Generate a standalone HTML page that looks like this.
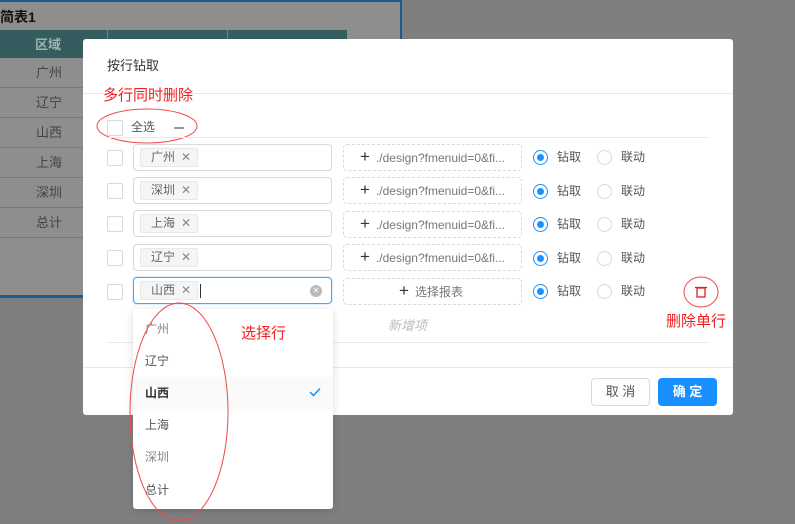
<!DOCTYPE html>
<html><head><meta charset="utf-8"><style>
*{box-sizing:border-box;margin:0;padding:0}
body{width:795px;height:523px;overflow:hidden;background:#7f7f80;font-family:"Liberation Sans","Noto Sans CJK SC",sans-serif;position:relative;font-size:12px;color:#555;line-height:1.35}
.a{position:absolute}
.tbl{left:0;top:0;width:402px;height:298px;background:#8e8e8e;border-top:2px solid #1a5b95;border-right:2px solid #1a5b95;border-bottom:3px solid #1a5b95}
.hd{left:0;top:30px;width:347px;height:28px;background:#355d5f}
.cell{left:0;width:347px;height:30px;border-bottom:1px solid #777;color:#444;font-size:13px}
.cell span{position:absolute;left:36px;top:6px}
.modal{left:83px;top:39px;width:650px;height:376px;background:#fff;border-radius:3px}
.cb{width:16px;height:16px;border:1px solid #d9d9d9;border-radius:2px;background:#fff}
.sel{left:133px;width:199px;height:27px;border:1px solid #d9d9d9;border-radius:4px;background:#fff}
.tag{position:absolute;left:6px;top:3px;height:19px;padding:0 6px 0 10px;background:#f5f5f5;border:1px solid #e8e8e8;border-radius:2px;font-size:12px;color:#666;line-height:17px}
.tag i{font-style:normal;color:#888;margin-left:6px}
.rep{left:343px;width:179px;height:27px;border:1px dashed #d9d9d9;border-radius:4px;color:#777;font-size:12px;line-height:24px;padding-left:16px;white-space:nowrap}
.rep b{font-weight:normal;color:#333;font-size:17px;margin-right:6px}
.rad{width:15px;height:15px;border-radius:50%;border:1px solid #d9d9d9;background:#fff}
.rad.on{border-color:#1890ff}
.rad.on::after{content:"";position:absolute;left:3px;top:3px;width:7px;height:7px;border-radius:50%;background:#1890ff}
.rt{font-size:12px;color:#555}
.red{color:#f02020;font-size:15px}
.dd{left:133px;top:309px;width:200px;height:200px;background:#fff;border-radius:3px;box-shadow:0 2px 8px rgba(0,0,0,.15)}
.it{position:absolute;left:12px;font-size:12px;color:#555}
</style></head><body>
<div class="a tbl"></div>
<div class="a" style="left:0;top:8px;font-size:14px;font-weight:bold;color:#111">简表1</div>
<div class="a hd"></div>
<div class="a" style="left:107px;top:30px;width:1px;height:28px;background:#6a8a8a"></div>
<div class="a" style="left:227px;top:30px;width:1px;height:28px;background:#6a8a8a"></div>
<div class="a" style="left:35px;top:36px;color:#9fb5b5;font-weight:bold;font-size:13px">区域</div>
<div class="a cell" style="top:58px"><span>广州</span></div>
<div class="a cell" style="top:88px"><span>辽宁</span></div>
<div class="a cell" style="top:118px"><span>山西</span></div>
<div class="a cell" style="top:148px"><span>上海</span></div>
<div class="a cell" style="top:178px"><span>深圳</span></div>
<div class="a cell" style="top:208px"><span>总计</span></div>

<div class="a modal"></div>
<div class="a" style="left:107px;top:57px;font-size:13px;color:#333">按行钻取</div>
<div class="a" style="left:83px;top:93px;width:650px;height:1px;background:#e8e8e8"></div>
<div class="a red" style="left:103px;top:86px">多行同时删除</div>
<svg class="a" style="left:96px;top:107px" width="104" height="38"><ellipse cx="51" cy="19" rx="50" ry="17" fill="none" stroke="#f04848" stroke-width="1"/></svg>
<div class="a cb" style="left:107px;top:120px"></div>
<div class="a" style="left:131px;top:119px;color:#555">全选</div>
<div class="a" style="left:174px;top:127px;width:10px;height:2px;background:#999"></div>
<div class="a" style="left:107px;top:137px;width:602px;height:1px;background:#e8e8e8"></div>

<div class="a cb" style="left:107px;top:150px"></div>
<div class="a sel" style="top:144px"><div class="tag">广州<i>✕</i></div></div>
<div class="a rep" style="top:144px"><b>+</b>./design?fmenuid=0&amp;fi...</div>
<div class="a rad on" style="left:533px;top:150px"></div><div class="a rt" style="left:557px;top:149px">钻取</div>
<div class="a rad" style="left:597px;top:150px"></div><div class="a rt" style="left:621px;top:149px">联动</div>

<div class="a cb" style="left:107px;top:183px"></div>
<div class="a sel" style="top:177px"><div class="tag">深圳<i>✕</i></div></div>
<div class="a rep" style="top:177px"><b>+</b>./design?fmenuid=0&amp;fi...</div>
<div class="a rad on" style="left:533px;top:184px"></div><div class="a rt" style="left:557px;top:183px">钻取</div>
<div class="a rad" style="left:597px;top:184px"></div><div class="a rt" style="left:621px;top:183px">联动</div>

<div class="a cb" style="left:107px;top:216px"></div>
<div class="a sel" style="top:210px"><div class="tag">上海<i>✕</i></div></div>
<div class="a rep" style="top:211px"><b>+</b>./design?fmenuid=0&amp;fi...</div>
<div class="a rad on" style="left:533px;top:217px"></div><div class="a rt" style="left:557px;top:216px">钻取</div>
<div class="a rad" style="left:597px;top:217px"></div><div class="a rt" style="left:621px;top:216px">联动</div>

<div class="a cb" style="left:107px;top:250px"></div>
<div class="a sel" style="top:244px"><div class="tag">辽宁<i>✕</i></div></div>
<div class="a rep" style="top:244px"><b>+</b>./design?fmenuid=0&amp;fi...</div>
<div class="a rad on" style="left:533px;top:251px"></div><div class="a rt" style="left:557px;top:250px">钻取</div>
<div class="a rad" style="left:597px;top:251px"></div><div class="a rt" style="left:621px;top:250px">联动</div>

<div class="a cb" style="left:107px;top:284px"></div>
<div class="a sel" style="top:277px;border-color:#40a9ff;box-shadow:0 0 0 1px rgba(24,144,255,.15)"><div class="tag">山西<i>✕</i></div>
<div class="a" style="left:66px;top:6px;width:1px;height:14px;background:#333"></div>
<div class="a" style="left:176px;top:7px;width:12px;height:12px;border-radius:50%;background:#bbb;color:#fff;font-size:8px;line-height:12px;text-align:center">✕</div></div>
<div class="a rep" style="top:278px;padding-left:55px"><b>+</b>选择报表</div>
<div class="a rad on" style="left:533px;top:284px"></div><div class="a rt" style="left:557px;top:283px">钻取</div>
<div class="a rad" style="left:597px;top:284px"></div><div class="a rt" style="left:621px;top:283px">联动</div>
<svg class="a" style="left:683px;top:276px" width="38" height="32"><ellipse cx="18" cy="16" rx="17" ry="15" fill="none" stroke="#f04848"/><rect x="14" y="12" width="8" height="9" fill="none" stroke="#e02020" stroke-width="1.3"/><line x1="12" y1="11.5" x2="24" y2="11.5" stroke="#e02020" stroke-width="1.3"/></svg>
<div class="a red" style="left:666px;top:312px">删除单行</div>
<div class="a" style="left:388px;top:317px;color:#bbb;font-style:italic;font-size:13px">新增项</div>
<div class="a" style="left:107px;top:342px;width:602px;height:1px;background:#e8e8e8"></div>
<div class="a" style="left:83px;top:367px;width:650px;height:1px;background:#e8e8e8"></div>
<div class="a" style="left:591px;top:378px;width:59px;height:28px;border:1px solid #d9d9d9;border-radius:4px;text-align:center;line-height:26px;color:#555;font-size:13px">取 消</div>
<div class="a" style="left:658px;top:378px;width:59px;height:28px;background:#1890ff;border-radius:4px;text-align:center;line-height:28px;color:#fff;font-size:13px;font-weight:bold">确 定</div>

<div class="a dd">
<div class="a" style="left:0;top:68px;width:200px;height:32px;background:#fafafa"></div>
<div class="it" style="top:12px;color:#888">广州</div>
<div class="it" style="top:44px">辽宁</div>
<div class="it" style="top:76px;font-weight:bold;color:#333">山西</div>
<div class="it" style="top:108px">上海</div>
<div class="it" style="top:140px;color:#888">深圳</div>
<div class="it" style="top:173px">总计</div>
<svg class="a" style="left:176px;top:78px" width="12" height="10"><path d="M1 5 L4.5 8.5 L11 1.5" fill="none" stroke="#1890ff" stroke-width="1.5"/></svg>
</div>
<svg class="a" style="left:129px;top:302px" width="104" height="222"><ellipse cx="50" cy="110" rx="49" ry="109" fill="none" stroke="#f04848"/></svg>
<div class="a red" style="left:241px;top:324px">选择行</div>
</body></html>
